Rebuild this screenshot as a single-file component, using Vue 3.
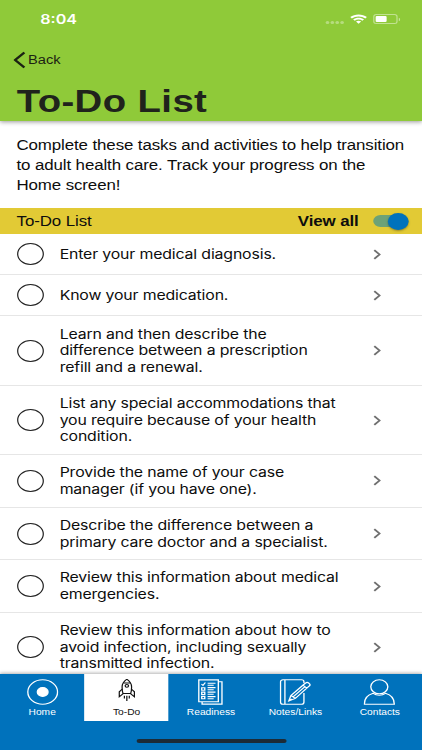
<template>
  <div class="viewport">
    <div class="screen">
      <header class="header">
        <div class="status-bar">
          <span class="time">8:04</span>
          <div class="status-icons">
            <span class="signal"><i v-for="n in 4" :key="n"></i></span>
            <svg class="wifi" viewBox="0 0 16 11">
              <path d="M8 0.3C5 0.3 2.3 1.4 0.2 3.3L1.7 4.9C3.4 3.4 5.6 2.5 8 2.5s4.6 0.9 6.3 2.4l1.5-1.6C13.7 1.4 11 0.3 8 0.3z" />
              <path d="M8 4C6.1 4 4.3 4.7 2.9 5.9l1.5 1.5C5.4 6.6 6.6 6.1 8 6.1s2.6 0.5 3.6 1.3l1.5-1.5C11.7 4.7 9.9 4 8 4z" />
              <path d="M8 7.4c-0.9 0-1.8 0.3-2.4 0.9L8 10.9l2.4-2.6C9.8 7.7 8.9 7.4 8 7.4z" />
            </svg>
            <span class="battery"><span class="battery-level"></span></span>
          </div>
        </div>
        <button class="back">
          <svg viewBox="0 0 10 18"><path d="M9 1.5L1.4 9 9 16.5" /></svg>
          <span>Back</span>
        </button>
        <h1 class="title">To-Do List</h1>
      </header>

      <main class="content">
        <p class="intro">{{ intro }}</p>

        <div class="list-header">
          <span>To-Do List</span>
          <b>View all</b>
          <button class="toggle" :class="{ on: viewAll }" aria-label="View all" @click="viewAll = !viewAll">
            <span class="knob"></span>
          </button>
        </div>

        <ul class="todo-list">
          <li v-for="(item, i) in items" :key="i" class="todo-item">
            <span class="check"></span>
            <span class="todo-text">{{ item }}</span>
            <svg class="chevron" viewBox="0 0 7 12"><path d="M0.9 1.2L5.6 6 0.9 10.8" /></svg>
          </li>
        </ul>
      </main>

      <footer class="footer">
        <nav class="tabs">
          <a
            v-for="tab in tabs"
            :key="tab"
            class="tab"
            :class="{ active: activeTab === tab }"
            @click="activeTab = tab"
          >
            <svg v-if="tab === 'Home'" class="icon" viewBox="0 0 26 26">
              <circle cx="13" cy="13" r="12.2" />
              <circle cx="13" cy="13" r="4.4" fill="currentColor" />
            </svg>
            <svg v-else-if="tab === 'To-Do'" class="icon rocket" viewBox="0 0 26 26">
              <path d="M13 0.2C10.2 2.6 9.1 5 9.1 8c0 2.800 0.200 4.800 0.800 6.600h6.200c0.600-1.800 0.800-3.800 0.800-6.600 0-3-1.100-5.400-3.900-7.800z" />
              <path d="M10.300 3.900h5.400" />
              <circle cx="13" cy="6.800" r="1.400" />
              <path d="M9.300 10L6.800 12.800v5l3.200-3.200M16.700 10l2.500 2.800v5L16 14.600" />
              <path d="M11 16.800v2.700M13 16.800v5.200M15 16.800v2.700" />
            </svg>
            <svg v-else-if="tab === 'Readiness'" class="icon" viewBox="0 0 26 26">
              <path d="M3 0.9h16v21.8H3zM19.2 2.800H22v22.300H5.700V23" />
              <path d="M5.200 5l1.200 1.300 2-2.800M5.400 8.800h2.500v2.400H5.400zM5.400 13.100h2.500v2.400H5.400zM5.400 17.400h2.500v2.400H5.400z" />
              <path d="M10.200 4.200h6.500M10.200 6.300h5M10.200 8.600h6.500M10.200 10.800h5M10.200 13.100h6.500M10.200 15.300h5M10.200 17.600h6.500M10.200 19.700h5" />
            </svg>
            <svg v-else-if="tab === 'Notes/Links'" class="icon" viewBox="0 0 26 26">
              <path d="M20.200 4V2.800a2 2 0 0 0-2-2H3a2 2 0 0 0-2 2v20.400a2 2 0 0 0 2 2h15.200a2 2 0 0 0 2-2V14M4.600 0.800v24.400" />
              <path d="M7.800 22l1.700-5.500L20.500 5l1.100-1a1.700 1.700 0 0 1 2.400 0l0.600 0.600a1.700 1.700 0 0 1 0 2.400L13.200 19.400zM19.300 6.200l3.300 3M9.500 16.500l3.700 2.900M11.300 17.900L21 7.700M7.800 22l2.300-2.200" />
            </svg>
            <svg v-else class="icon" viewBox="0 0 26 26">
              <circle cx="13" cy="7.800" r="7" />
              <path d="M8 14.300C3.500 15.800 0.700 19 0.700 25.200h24.600c0-6.200-2.800-9.400-7.300-10.900M8 14.300c2.800 2.600 7.200 2.600 10 0" />
            </svg>
            <span>{{ tab }}</span>
          </a>
        </nav>
        <div class="home-indicator"></div>
      </footer>
    </div>
  </div>
</template>

<script setup>
import { ref } from 'vue'

const viewAll = ref(true)
const activeTab = ref('To-Do')

const tabs = ['Home', 'To-Do', 'Readiness', 'Notes/Links', 'Contacts']

const intro = 'Complete these tasks and activities to help transition\nto adult health care. Track your progress on the\nHome screen!'

const items = [
  'Enter your medical diagnosis.',
  'Know your medication.',
  'Learn and then describe the\ndifference between a prescription\nrefill and a renewal.',
  'List any special accommodations that\nyou require because of your health\ncondition.',
  'Provide the name of your case\nmanager (if you have one).',
  'Describe the difference between a\nprimary care doctor and a specialist.',
  'Review this information about medical\nemergencies.',
  'Review this information about how to\navoid infection, including sexually\ntransmitted infection.'
]
</script>

<style>
body {
  margin: 0;
  overflow: hidden;
}
</style>

<style scoped>
.viewport {
  width: 422px;
  height: 750px;
  overflow: hidden;
  background: #fff;
}

/* The phone layout is 346 wide and stretched to fill the window */
.screen {
  width: 346px;
  height: 750px;
  transform: scaleX(1.21965);
  transform-origin: 0 0;
  display: flex;
  flex-direction: column;
  font-family: 'Liberation Sans', Arial, sans-serif;
  color: #0d0d0d;
}

button {
  border: none;
  padding: 0;
  background: none;
  font: inherit;
  color: inherit;
}

/* Header */
.header {
  height: 120.5px;
  flex-shrink: 0;
  background: #8fca39;
  box-shadow: 0 1px 4px rgba(0, 0, 0, 0.4);
  z-index: 1;
}

.status-bar {
  height: 38px;
  display: flex;
  justify-content: space-between;
  align-items: center;
  padding: 0 18px 0 33px;
  box-sizing: border-box;
  color: #fff;
}

.time {
  font-family: Inter, sans-serif;
  font-size: 13.2px;
  font-weight: 600;
}

.status-icons {
  display: flex;
  align-items: center;
}

.signal {
  display: flex;
  gap: 1.3px;
  margin: 7px 5px 0 0;
}

.signal i {
  width: 2.8px;
  height: 3px;
  border-radius: 50%;
  background: rgba(255, 255, 255, 0.35);
}

.wifi {
  width: 14px;
  height: 10px;
  fill: #fff;
  margin-right: 5px;
}

.battery {
  position: relative;
  width: 20px;
  height: 10px;
  box-sizing: border-box;
  border: 1px solid rgba(255, 255, 255, 0.45);
  border-radius: 2.5px;
  padding: 1px;
  margin-right: 2px;
}

.battery::after {
  content: '';
  position: absolute;
  right: -3px;
  top: 2.5px;
  width: 1.3px;
  height: 3px;
  border-radius: 0 2px 2px 0;
  background: rgba(255, 255, 255, 0.5);
}

.battery-level {
  display: block;
  width: 9px;
  height: 6px;
  border-radius: 1px;
  background: #fff;
}

.back {
  display: flex;
  align-items: center;
  height: 18px;
  margin: 13px 0 0 11px;
  font-size: 12px;
  color: #1c2213;
}

.back svg {
  width: 10px;
  height: 18px;
  margin-right: 2px;
  fill: none;
  stroke: currentColor;
  stroke-width: 2.1;
}

.title {
  margin: 15px 0 0 13.7px;
  font-size: 31.4px;
  line-height: 36px;
  letter-spacing: 0.34px;
  color: #20231c;
}

/* Content */
.content {
  flex: 1;
  min-height: 0;
  overflow: hidden;
}

.intro {
  margin: 0;
  height: 87.5px;
  box-sizing: border-box;
  padding: 14px 0 0 13.5px;
  font-size: 13.85px;
  line-height: 20.1px;
  letter-spacing: -0.085px;
  white-space: pre;
}

.list-header {
  height: 26px;
  display: flex;
  align-items: center;
  padding: 0 11.4px 0 13.6px;
  background: #e2ca35;
  font-size: 13.85px;
  letter-spacing: -0.08px;
}

.list-header b {
  margin-left: auto;
  margin-right: 12px;
}

.toggle {
  width: 28.5px;
  height: 12px;
  border-radius: 6px;
  background: #b5a850;
  display: flex;
  align-items: center;
}

.toggle.on {
  background: #6ca277;
  justify-content: flex-end;
}

.knob {
  width: 17px;
  height: 17px;
  flex-shrink: 0;
  border-radius: 50%;
  background: #fff;
  box-shadow: 0 1px 2px rgba(0, 0, 0, 0.35);
}

.toggle.on .knob {
  background: #0072bc;
}

.todo-list {
  list-style: none;
  margin: 0;
  padding: 0;
}

.todo-item {
  display: flex;
  align-items: center;
  box-sizing: border-box;
  min-height: 41.1px;
  padding: 9.3px 33.5px 8.9px 13.6px;
  border-bottom: 1px solid #e6e6e6;
}

.check {
  width: 22px;
  height: 22px;
  box-sizing: border-box;
  border: 1px solid #222;
  border-radius: 50%;
  margin-right: 13.3px;
}

.todo-text {
  font-family: Inter, sans-serif;
  font-size: 13px;
  line-height: 16.7px;
  letter-spacing: -0.125px;
  white-space: pre;
}

.chevron {
  width: 6.5px;
  height: 11px;
  margin-left: auto;
  fill: none;
  stroke: #707070;
  stroke-width: 1.8;
}

/* Bottom tabs */
.footer {
  height: 76px;
  flex-shrink: 0;
  background: #0072bc;
  box-shadow: 0 -1px 3px rgba(0, 0, 0, 0.3);
  z-index: 1;
}

.tabs {
  display: flex;
  height: 47px;
}

.tab {
  flex: 1;
  display: flex;
  flex-direction: column;
  align-items: center;
  padding-top: 4.5px;
  box-sizing: border-box;
  color: #fff;
  font-size: 8.4px;
  line-height: 11px;
}

.tab.active {
  background: #fff;
  color: #111;
}

.icon {
  width: 26px;
  height: 26px;
  margin-bottom: 2px;
  fill: none;
  stroke: currentColor;
  stroke-width: 1.1;
}

.icon.rocket {
  stroke-width: 1;
}

.home-indicator {
  width: 123px;
  height: 4.5px;
  margin: 17.5px auto 0;
  border-radius: 3px;
  background: #1c2b36;
}
</style>
